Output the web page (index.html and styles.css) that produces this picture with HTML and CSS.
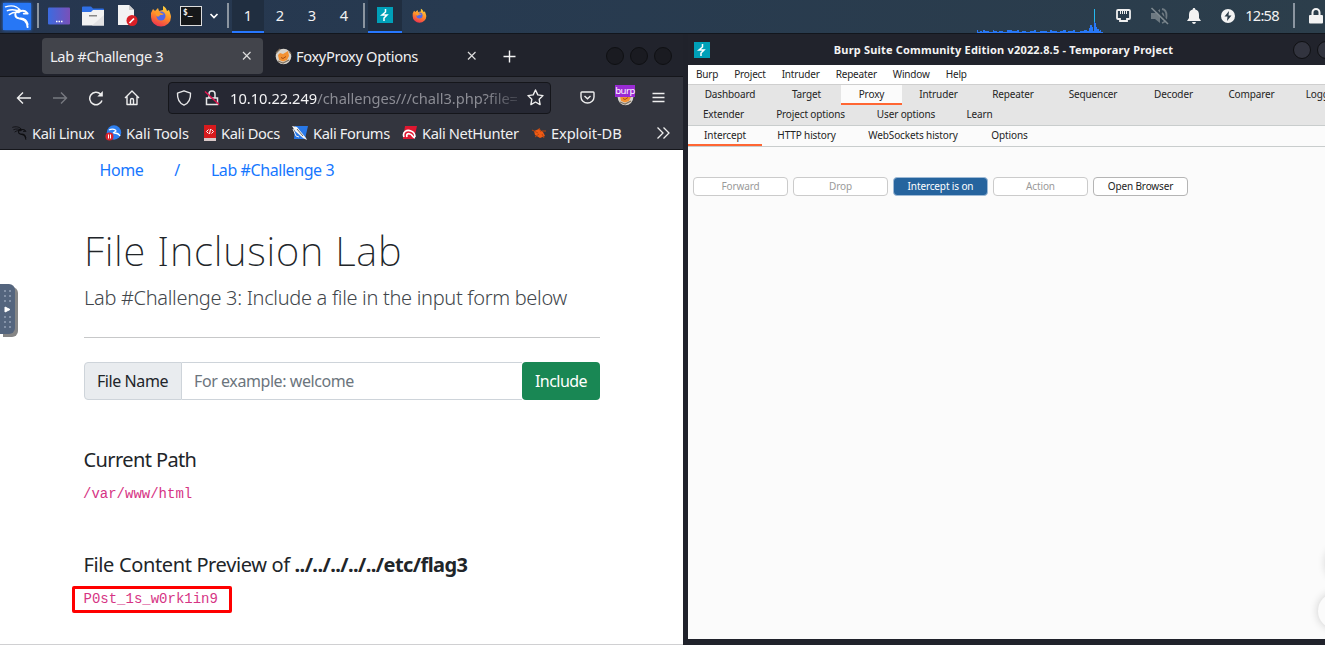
FILE: index.html
```html
<!DOCTYPE html>
<html lang="en">
<head>
<meta charset="utf-8">
<title>File Inclusion Lab</title>
<link rel="stylesheet" href="styles.css">
</head>
<body>
<svg class="defs" width="0" height="0">
  <defs>
    <linearGradient id="fire" x1="0.7" y1="0" x2="0.3" y2="1"><stop offset="0" stop-color="#ffd53d"/><stop offset=".5" stop-color="#ff8a2a"/><stop offset="1" stop-color="#ef3050"/></linearGradient>
    <linearGradient id="desk" x1="0" y1="0" x2="1" y2="0"><stop offset="0" stop-color="#3b6be0"/><stop offset="1" stop-color="#7a50b8"/></linearGradient>
    <symbol id="dragon" viewBox="0 0 28 28">
      <path d="M2 4c6-2 12-1 16 4M4 8c5-2 9-1 13 1M6 12c3-2 6-3 10-2" fill="none" stroke="currentColor" stroke-width="1.400" stroke-linecap="round"/>
      <path d="M16 7c-5 3-5 8 0 9 5 1 8 2 9 9M16 9c4-2 7-1 9 2l-4 0M18 16c4 0 6 2 7 6" fill="none" stroke="currentColor" stroke-width="2" stroke-linecap="round" stroke-linejoin="round"/>
    </symbol>
    <symbol id="fox" viewBox="0 0 22 22">
      <path d="M1 8 3 4l2 2 3-3 1 3 4-1 0-4c2 1 3 2 4 5l2-1c1 3 2 5 2 7a10 9.500 0 0 1-20 0c0-2 0-3 0-4z" fill="url(#fire)"/>
      <circle cx="11" cy="11" r="4.500" fill="#5068e8"/>
      <path d="M5 7c2-1 4-1 6 1l3 1c-1 1-3 1-4 1-1 2-3 2-4 0z" fill="#ff9a28"/>
    </symbol>
    <symbol id="bolt" viewBox="0 0 16 16">
      <rect width="16" height="16" fill="#00a0b8"/>
      <path d="M8.500 2v3L5 8h5l-3 3v3" fill="none" stroke="#fff" stroke-width="1.500"/>
    </symbol>
    <symbol id="foxy" viewBox="0 0 17 17">
      <circle cx="8.500" cy="8.500" r="7.800" fill="#d8d4cc"/>
      <path d="M3 7l2-2 3 1 5-3 1 5-2 4-4 1.500L4 12z" fill="#f39132"/>
      <path d="M1 5l4-4M14 3l2 3M3 13l5 2 6-3" stroke="#81715f" stroke-width="1.300" fill="none"/>
      <path d="M6 9.500l2 1 3-2" stroke="#a84d12" fill="none"/>
    </symbol>
  </defs>
</svg>

<header class="panel">
  <div class="cell kali"><svg width="28" height="27"><use href="#dragon"/></svg></div>
  <div class="cell"><i class="sep"></i></div>
  <div class="cell"><svg width="22" height="18"><rect y="0.500" width="22" height="17" rx="1" fill="url(#desk)"/><path d="M8 14.500h1.500m1 0H12m1 0h1.500" stroke="#fff" stroke-width="1.500"/></svg></div>
  <div class="cell"><svg width="22" height="20"><path d="M0 1.500Q0 .5 1 .5h8l2 2h10q1 0 1 1V8H0z" fill="#2f6fe4"/><path d="M0 6h9l2-2h11v15.500H0z" fill="#f2f2f2"/><path d="M22 9v10.500H10z" fill="#e2e2e4"/><rect x="7" y="9" width="8" height="1.500" fill="#888"/></svg></div>
  <div class="cell"><svg width="21" height="23"><path d="M1 1h11l5 5v15H1z" fill="#f3f3f3"/><path d="M12 1v5h5z" fill="#cfcfcf"/><circle cx="15" cy="16.500" r="5.500" fill="#da1f26"/><path d="M12.500 19l4.500-4.500" stroke="#fff" stroke-width="1.700"/></svg></div>
  <div class="cell"><svg width="22" height="22"><use href="#fox"/></svg></div>
  <div class="cell"><div class="term">$_</div></div>
  <div class="cell"><svg width="10" height="8"><path d="M1.500 2l3.500 3.500L8.500 2" fill="none" stroke="#fff" stroke-width="1.700"/></svg></div>
  <div class="cell"><i class="sep"></i></div>
  <div class="cell active">1</div>
  <div class="cell num">2</div>
  <div class="cell num">3</div>
  <div class="cell num">4</div>
  <div class="cell"><i class="sep"></i></div>
  <div class="cell active"><svg width="16" height="16"><use href="#bolt"/></svg></div>
  <div class="cell"><svg width="15" height="15" viewBox="0 0 22 22"><use href="#fox"/></svg></div>
  <div class="cell"></div>
  <div class="cell"><svg class="graph" width="126" height="24"><path d="M0 24V21H1V23H3V22H5V23H6V21H8V22H12V23H16V21H17V22H20V23H22V22H26V23H30V21H35V22H40V21H42V23H45V22H49V23H53V22H57V21H59V23H63V22H70V23H73V21H75V22H80V23H83V22H86V21H89V23H91V22H96V21H98V23H103V22H107V21H110V22H112V19H113V16H115V18H116V22H117V0H118V14H119V18H120V20H122V22H123V21H124V23H126V24z" fill="#2878f8"/><path d="M117.500 0v13" stroke="#25b8ee"/></svg></div>
  <div class="cell"><svg width="15" height="13"><path d="M2 1h11q1 0 1 1v7q0 1-1 1h-2v2H4v-2H2Q1 10 1 9V2q0-1 1-1z" fill="none" stroke="#f0f0f0" stroke-width="1.800"/><path d="M4.500 2v3m2-3v3m2-3v3m2-3v3" stroke="#f0f0f0"/></svg></div>
  <div class="cell"><svg width="20" height="18"><path d="M1 6h4l5-4v14l-5-4H1z" fill="#6e7a82"/><path d="M12 6c2 1 2 5 0 6M12 2c6 1 6 12 0 14" fill="none" stroke="#6e7a82" stroke-width="1.800"/><path d="M3 0l16 16" stroke="#2b3c49" stroke-width="2"/><path d="M1.500 1l16.500 16" stroke="#7f8a91" stroke-width="1.600"/></svg></div>
  <div class="cell"><svg width="14" height="16"><path d="M7 0c1 0 1.300.6 1.300 1.500C11 2 12 4 12 7v3l2 3H0l2-3V7c0-3 1-5 3.700-5.500C5.700.6 6 0 7 0zM5 14h4q-.5 2-2 2t-2-2z" fill="#f3f3f3"/></svg></div>
  <div class="cell"><svg width="14" height="14"><circle cx="7" cy="7" r="7" fill="#f3f3f3"/><path d="M8 2L3.500 7.500h3L6 12l4.500-5.500h-3z" fill="#2b3c49"/></svg></div>
  <div class="cell clock">12:58</div>
  <div class="cell"><i class="sep"></i></div>
  <div class="cell"><svg width="14" height="16"><path d="M3.500 8V4.500a3.500 3.500 0 0 1 7 0V8" fill="none" stroke="#f3f3f3" stroke-width="2"/><rect y="7" width="14" height="8.500" rx="1" fill="#f3f3f3"/></svg></div>
</header>

<main class="desktop">
  <section class="browser">
    <div class="tabstrip">
      <div class="tab current"><span>Lab #Challenge 3</span><svg width="10" height="10"><path d="M1 1l7.500 7.500M8.500 1L1 8.500" stroke="#ddd" stroke-width="1.200"/></svg></div>
      <div class="tab second"><svg width="17" height="17"><use href="#foxy"/></svg><span>FoxyProxy Options</span><svg class="x" width="10" height="10"><path d="M1 1l7.500 7.500M8.500 1L1 8.500" stroke="#ddd" stroke-width="1.200"/></svg></div>
      <svg class="plus" width="13" height="13"><path d="M6.500 .5v12M.5 6.500h12" stroke="#f4f4f4" stroke-width="1.400"/></svg>
      <div class="dots"><i></i><i></i><i></i></div>
    </div>
    <div class="toolbar">
      <div class="cell"><svg width="16" height="14"><path d="M15 7H2M7 1.500L1.500 7 7 12.500" fill="none" stroke="#eee" stroke-width="1.400"/></svg></div>
      <div class="cell"><svg width="16" height="14"><path d="M1 7h13M9 1.500L14.500 7 9 12.500" fill="none" stroke="#777980" stroke-width="1.400"/></svg></div>
      <div class="cell"><svg width="16" height="16"><path d="M14 10.500A6.300 6.300 0 1 1 12.500 4" fill="none" stroke="#eee" stroke-width="1.500"/><path d="M14.800 1v5.500H9.300z" fill="#eee"/></svg></div>
      <div class="cell"><svg width="16" height="16"><path d="M1 8l7-7 7 7M3 6.500v8h10v-8M6.500 14v-4a1.500 1.500 0 0 1 3 0v4" fill="none" stroke="#eee" stroke-width="1.400" stroke-linejoin="round"/></svg></div>
      <div class="urlbar">
        <svg width="16" height="16"><path d="M8 .8l6.500 2.300c.3 6-1.500 10-6.500 12C3 13.100 1.200 9.100 1.500 3.100z" fill="none" stroke="#e6e6e8" stroke-width="1.400" stroke-linejoin="round"/></svg>
        <svg class="lock" width="16" height="16"><path d="M5 8V4a3 3 0 0 1 6 0v4M2.500 8h11v6.500h-11z" fill="none" stroke="#e6e6e8" stroke-width="1.500"/><path d="M1 1.500l14 13" stroke="#e2144f" stroke-width="1.500"/></svg>
        <div class="url"><b>10.10.22.249</b>/challenges///chall3.php?file=</div>
        <svg width="17" height="17"><path d="M8.500 1l2.300 4.900 5.200.7-3.800 3.700.9 5.300-4.600-2.600-4.600 2.600.9-5.300L1 6.600l5.200-.7z" fill="none" stroke="#eee" stroke-width="1.400" stroke-linejoin="round"/></svg>
      </div>
      <div class="cell pocket"><svg width="15" height="13"><path d="M1.800 1h11.400q.8 0 .8.800V6a6.500 6 0 0 1-13 0V1.800Q1 1 1.800 1zM4.500 5l3 2.800 3-2.800" fill="none" stroke="#eee" stroke-width="1.400"/></svg></div>
      <div class="cell foxy"><svg width="17" height="17"><use href="#foxy"/></svg><span class="badge">burp</span></div>
      <div class="cell"><svg width="13" height="11"><path d="M.5 1.500h12m-12 4h12m-12 4h12" stroke="#eee" stroke-width="1.300"/></svg></div>
    </div>
    <nav class="bookmarks">
      <a><svg width="17" height="16" class="ink" viewBox="0 0 28 28"><use href="#dragon"/></svg>Kali Linux</a>
      <a><svg width="17" height="16"><circle cx="9" cy="7.500" r="7.200" fill="#2d7ff0"/><path d="M4 5c4-2 7 0 7 1l-3 2M9 8c3 0 5 1 6 3" fill="none" stroke="#fff" stroke-width="1.300"/><circle cx="4.500" cy="11.500" r="4" fill="#d9232b"/><path d="M3.500 9.500v4m2-4v4" stroke="#fff"/></svg>Kali Tools</a>
      <a><svg width="14" height="16"><path d="M1 0h12v13H1z" fill="#d81a1d"/><path d="M1 13h12v3H1z" fill="#d9c8c8"/><path d="M5.500 4.500l-2 2 2 2m3-4l2 2-2 2M7.500 4l-1 5" stroke="#fff" fill="none"/></svg>Kali Docs</a>
      <a><svg width="17" height="16"><path d="M3 1h13l-3 13H2z" fill="#2878e8"/><path d="M0 1l5 1 9 11 1 2-4-2L3 6z" fill="#f5f5f5"/><path d="M1 4l3 7 3 1" fill="none" stroke="#eee"/><path d="M5 4l6 7" stroke="#666"/></svg>Kali Forums</a>
      <a><svg width="16" height="16"><path d="M3 1h12l-3 13H1z" fill="#df1730"/><path d="M2 12c-2-5 3-8 7-6 3 1 4 3 4 6M5 12c-1-3 1-4 3-3 2 0 2 3 5 4" fill="none" stroke="#fff" stroke-width="1.700"/></svg>Kali NetHunter</a>
      <a><svg width="16" height="16"><path d="M3 6l5-2 4 3 2 4-5 2-5-3z" fill="#f15a13"/><path d="M1 5l6 3M4 12l4-3M8 3l2 4M13 13l-2-4M11 6h4" stroke="#b9470f"/></svg>Exploit-DB</a>
      <svg class="more" width="14" height="14"><path d="M1.500 1.500L7 7l-5.500 5.500M7.500 1.500L13 7l-5.500 5.500" fill="none" stroke="#eee" stroke-width="1.300"/></svg>
    </nav>
    <div class="page">
      <div class="crumbs"><a>Home</a><a>/</a><a>Lab #Challenge 3</a></div>
      <h1>File Inclusion Lab</h1>
      <p class="lead">Lab #Challenge 3: Include a file in the input form below</p>
      <div class="rule"></div>
      <div class="group"><label>File Name</label><div class="field">For example: welcome</div><div class="submit">Include</div></div>
      <h5 class="path">Current Path</h5>
      <code>/var/www/html</code>
      <h5 class="preview">File Content Preview of <b>../../../../../etc/flag3</b></h5>
      <div class="flag"><code>P0st_1s_w0rk1in9</code></div>
    </div>
    <div class="handle"><svg width="15" height="50"><g fill="#8492a8"><path d="M4 6h2v2H4zm5 0h2v2H9zM4 11h2v2H4zm5 0h2v2H9zM4 16h2v2H4zm5 0h2v2H9zM4 32h2v2H4zm5 0h2v2H9zM4 37h2v2H4zm5 0h2v2H9zM4 42h2v2H4zm5 0h2v2H9z"/></g><path d="M5 23l5 2.500-5 2.500z" fill="#fff" stroke="#fff" stroke-linejoin="round"/></svg></div>
  </section>

  <section class="burp">
    <div class="titlebar">
      <svg width="16" height="16"><use href="#bolt"/></svg>
      <span>Burp Suite Community Edition v2022.8.5 - Temporary Project</span>
      <i></i><i></i>
    </div>
    <div class="menu"><span>Burp</span><span>Project</span><span>Intruder</span><span>Repeater</span><span>Window</span><span>Help</span></div>
    <div class="tools">
      <div class="row one"><span>Dashboard</span><span>Target</span><span class="on">Proxy</span><span>Intruder</span><span>Repeater</span><span>Sequencer</span><span>Decoder</span><span>Comparer</span><span>Logger</span></div>
      <div class="row two"><span>Extender</span><span>Project options</span><span>User options</span><span>Learn</span></div>
    </div>
    <div class="row sub"><span class="on">Intercept</span><span>HTTP history</span><span>WebSockets history</span><span>Options</span></div>
    <div class="body">
      <div class="actions"><div class="off">Forward</div><div class="off">Drop</div><div class="primary">Intercept is on</div><div class="off">Action</div><div>Open Browser</div></div>
      <i class="bubble high"></i><i class="bubble"></i>
    </div>
  </section>
</main>
</body>
</html>
```
FILE: styles.css
```css
* { box-sizing: border-box; }
body { margin: 0; width: 1325px; height: 645px; overflow: hidden; background: #20222b; font-family: "Noto Sans", sans-serif; }
.defs { position: absolute; }
svg { display: block; flex: none; }
.cell { display: flex; align-items: center; justify-content: center; min-width: 0; }

.panel {
  display: grid; height: 34px; color: #f2f2f2; font-size: 14.667px;
  grid-template-columns: 34px 8px 34px 34px 35px 32px 28px 18px 9px 32px 32px 32px 32px 8px 34px 34px 1fr 126px 40px 34px 34px 34px 37px 24px 19px;
  background: linear-gradient(90deg, #26364f, #273a50 35%, #2c3e4b);
  border-bottom: 1px solid #12161d; padding-bottom: 1px;
}
.panel > .cell { padding-bottom: 1px; height: 32px; }
.kali { color: #fff; align-items: flex-start; }
.kali svg { background: #2777f5; box-shadow: 0 0 3px #2777f5; margin-top: 3px; }
.sep { width: 2px; height: 25px; background: #8b95a0; }
.term { width: 22px; height: 20px; background: #151719; border: 1px solid #ddd; font: bold 8px/10px "DejaVu Sans Mono", monospace; padding: 1px 2px; }
.panel > .active { background: #202e40; border-bottom: 2px solid #2777ff; padding: 0 0 1px; height: 33px; }
.panel > .num { padding-bottom: 2px; }
.graph { align-self: flex-end; margin-bottom: -2px; }
.panel > .clock { letter-spacing: -.75px; padding: 0 3px 3px 0; }

.desktop { display: grid; grid-template-columns: 683px 642px; height: 611px; }
.browser { position: relative; display: grid; grid-template-rows: 43px 41px 32px 1fr; border-bottom: 1px solid #d0d0d2; }
.tabstrip { display: flex; align-items: flex-start; background: #21232c; border-bottom: 1px solid #15161b; color: #f0f0f2; font-size: 14.667px; padding: 4px 0 0 42px; }
.tab { display: flex; align-items: center; height: 36px; letter-spacing: -.36px; white-space: nowrap; }
.current { width: 221px; background: #42444b; border-radius: 4px; padding: 0 11px 0 8px; justify-content: space-between; }
.second { width: 240px; padding-left: 12px; }
.second span { margin-left: 4px; }
.second .x { margin-left: auto; margin-right: 26px; }
.plus { margin-top: 12px; }
.dots { display: flex; gap: 6px; margin: 9px 0 0 90px; }
.dots i, .titlebar i { width: 18px; height: 18px; border-radius: 50%; background: #1a1b21; border: 1px solid #0f1013; flex: none; }

.toolbar { display: grid; grid-template-columns: 36px 36px 36px 35px 402px 1fr 32px 34px; background: #33353e; padding-left: 6px; padding-right: 8px; }
.urlbar { display: flex; align-items: center; align-self: center; height: 32px; margin: 0 0 0 19px; width: 383px; padding: 0 6px 0 7px; background: #262833; border: 1px solid #15161b; border-radius: 4px; }
.lock { margin: 0 10px 0 12px; }
.url { width: 290px; margin-right: auto; white-space: nowrap; font-size: 14.667px; letter-spacing: -.05px; color: #8b8c94; mask-image: linear-gradient(90deg, #000 88%, transparent 103%); }
.url b { font-weight: 400; color: #f3f3f5; letter-spacing: 0; }
.pocket { padding-left: 14px; }
.foxy { position: relative; }
.badge { position: absolute; left: 6px; top: 8px; width: 20px; height: 12px; background: #9a2bd4; color: #fff; font-size: 9.500px; line-height: 11px; letter-spacing: -.5px; text-align: center; }

.bookmarks { display: flex; align-items: center; background: #33353e; border-bottom: 1px solid #15161b; padding: 0 0 2px 11px; color: #f0f0f2; font-size: 14.667px; }
.bookmarks a { display: flex; align-items: center; gap: 4px; letter-spacing: -.38px; white-space: nowrap; }
.bookmarks a:nth-child(1) { width: 94px; }
.bookmarks a:nth-child(2) { width: 98px; letter-spacing: -.15px; }
.bookmarks a:nth-child(3) { width: 89px; }
.bookmarks a:nth-child(4) { width: 110px; }
.bookmarks a:nth-child(5) { width: 129px; }
.bookmarks a:nth-child(6) { letter-spacing: -.1px; }
.ink { color: #0d0d10; }
.more { margin: 0 13px 0 auto; }

.page { background: #fff; padding: 8px 83px 0 84px; color: #212529; overflow: hidden; }
.crumbs { display: flex; gap: 32px; padding-left: 15.500px; font-size: 16px; line-height: 24px; letter-spacing: -.42px; color: #1677ff; }
.crumbs a:nth-child(2) { margin: 0 -1px; }
h1 { margin: 45px 0 0; font-size: 40px; line-height: 48px; font-weight: 200; letter-spacing: .78px; }
.lead { margin: 8px 0 0; font-size: 20px; line-height: 30px; font-weight: 300; letter-spacing: -.31px; white-space: nowrap; color: #41464b; }
.rule { height: 1px; background: #c7c8c9; margin-top: 24px; }
.group { display: flex; height: 38px; margin-top: 24px; font-size: 16px; line-height: 36px; letter-spacing: -.42px; }
.group label { width: 98px; text-align: center; background: #e9ecef; border: 1px solid #ced4da; border-radius: 4px 0 0 4px; padding-right: 1px; }
.field { flex: 1; border: 1px solid #ced4da; border-width: 1px 0; padding-left: 12px; color: #6c757d; }
.submit { width: 78px; text-align: center; background: #198754; color: #fff; border-radius: 4px; line-height: 38px; letter-spacing: -.55px; }
h5 { margin: 0 0 0 -.5px; font-size: 20px; line-height: 24px; font-weight: 400; letter-spacing: -.36px; white-space: nowrap; }
h5 b { letter-spacing: -.58px; }
.path { margin-top: 48px; letter-spacing: -.6px; }
code { display: block; font: 14px/21px "Liberation Mono", monospace; color: #d63384; }
.path + code { margin: 12px 0 0 -1px; }
.preview { margin-top: 48px; }
.flag { width: 160px; height: 27px; margin: 9px 0 0 -12px; border: 3px solid #f00; border-radius: 2px; padding: 0 8.500px; }
.handle { position: absolute; left: 0; top: 250px; width: 15px; height: 50px; background: #54657e; border-radius: 0 6px 6px 0; box-shadow: 3px 3px 0 #858585; }

.burp { position: relative; display: grid; grid-template-columns: 637px; grid-template-rows: 31px 19px 42px 21px 1fr; border-style: solid; border-color: #20222b; border-width: 0 0 6px 5px; overflow: hidden; font-size: 10px; letter-spacing: -.13px; color: #242424; }
.titlebar { display: grid; grid-template-columns: 16px 1fr 18px 14px; align-items: center; background: #21232c; padding-left: 6px; color: #f4f4f4; font-size: 11px; font-weight: 700; letter-spacing: .19px; }
.titlebar span { text-align: center; padding-left: 4px; }
.titlebar i { background: #32343f; }
.titlebar i:last-child { margin-left: 6px; }
.menu { display: flex; gap: 16px; padding-left: 8px; background: #fff; line-height: 19px; letter-spacing: -.18px; }
.tools { background: #e5e5e5; border-top: 1px solid #cfcfcf; border-bottom: 1px solid #c9cdcd; }
.row { display: grid; height: 20px; line-height: 18px; text-align: center; white-space: nowrap; }
.one { grid-template-columns: 84px 69px 61px 73px 76px 84px 77px 79px 62px; width: 665px; }
.two { grid-template-columns: 71px 103px 88px 59px; }
.sub { grid-template-columns: 74px 89px 124px 69px; height: 21px; background: #fbfbfb; border-bottom: 1px solid #c9cdcd; }
.on { background: #fbfbfb; border-bottom: 2px solid #ff6633; }
.body { background: #fbfbfb; padding: 30px 5px; }
.actions { display: flex; gap: 5px; }
.actions div { width: 95px; height: 19px; line-height: 17px; text-align: center; background: #fff; border: 1px solid #b5b5b5; border-radius: 4px; }
.actions .off { color: #9a9a9a; border-color: #cbcbcb; }
.actions .primary { color: #fff; background: #26649e; border-color: #9ebad6; }
.bubble { position: absolute; left: 630px; top: 559px; width: 36px; height: 36px; border-radius: 50%; background: #fbfbfb; box-shadow: 0 0 9px #ccc; }
.bubble.high { left: 638px; top: 511px; }
```
